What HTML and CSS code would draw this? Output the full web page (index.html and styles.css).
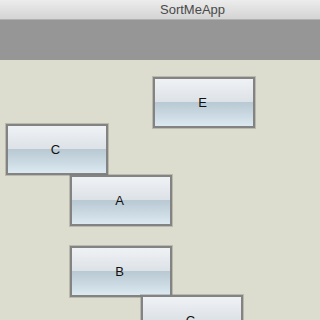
FILE: index.html
```html
<!DOCTYPE html>
<html>
<head>
<meta charset="utf-8">
<link rel="stylesheet" href="styles.css">
</head>
<body>
<div class="window">
  <div class="titlebar"><span class="title">SortMeApp</span></div>
  <div class="toolbar"></div>
  <div class="canvas">
    <div class="tile t-e">E</div>
    <div class="tile t-c">C</div>
    <div class="tile t-a">A</div>
    <div class="tile t-b">B</div>
    <div class="tile t-c2">C</div>
  </div>
</div>
</body>
</html>
```
FILE: styles.css
```css
html, body {
  margin: 0;
  padding: 0;
}
body {
  width: 320px;
  height: 320px;
  overflow: hidden;
  font-family: "Liberation Sans", Arial, sans-serif;
}
.window {
  display: flex;
  flex-direction: column;
  height: 320px;
}
.titlebar {
  height: 19px;
  border-bottom: 1px solid #b0b0b0;
  background: linear-gradient(to bottom, #ececec, #d4d4d4);
  display: flex;
  align-items: center;
  padding-left: 160px;
}
.title {
  font-size: 13px;
  color: #4a4a4a;
  line-height: 19px;
}
.toolbar {
  height: 40px;
  background: #969696;
}
.canvas {
  position: relative;
  flex: 1;
  background: #dcdccf;
}
.tile {
  position: absolute;
  box-sizing: border-box;
  width: 102px;
  height: 51px;
  padding-right: 3px;
  border: 2px solid #838383;
  box-shadow: 0 0 0 1px rgba(120,120,110,0.35);
  background: linear-gradient(to bottom, #eff2f5 0%, #dde2e7 48%, #b8c8d2 48%, #c9d8e1 75%, #dce9f1 100%);
  display: flex;
  align-items: center;
  justify-content: center;
  font-size: 13px;
  color: #111;
}
.t-e { left: 153px; top: 17px; }
.t-c { left: 6px; top: 64px; }
.t-a { left: 70px; top: 115px; }
.t-b { left: 70px; top: 186px; }
.t-c2 { left: 141px; top: 235px; }
```
